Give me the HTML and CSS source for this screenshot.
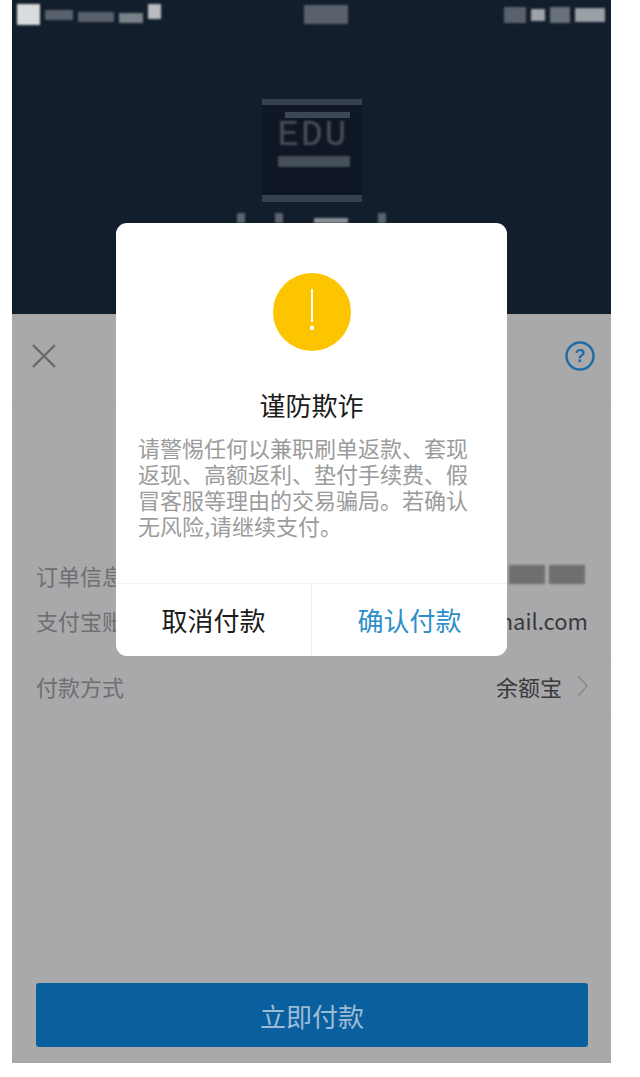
FILE: index.html
```html
<!DOCTYPE html>
<html lang="zh-CN">
<head>
<meta charset="utf-8">
<title>谨防欺诈</title>
<link rel="stylesheet" href="styles.css">
</head>
<body>
<main class="phone">
  <header class="hero">
    <div class="status">
      <div class="status-group">
        <span class="px px-icon"></span>
        <span class="px px-a"></span>
        <span class="px px-b"></span>
        <span class="px px-c"></span>
        <span class="px px-d"></span>
      </div>
      <div class="status-group">
        <span class="px px-time"></span>
      </div>
      <div class="status-group status-right">
        <span class="px px-e"></span>
        <span class="px px-f"></span>
        <span class="px px-g"></span>
        <span class="px px-h"></span>
      </div>
    </div>
    <div class="logo">
      <div class="logo-band"></div>
      <div class="logo-inner">
        <div class="logo-top"></div>
        <div class="logo-word">EDU</div>
        <div class="logo-low"></div>
      </div>
      <div class="logo-band logo-band-low"></div>
    </div>
    <div class="caption">
      <span></span><span></span><span class="caption-wide"></span><span></span>
    </div>
  </header>

  <section class="sheet">
    <nav class="nav">
      <svg class="icon-close" viewBox="0 0 26 26" aria-hidden="true"><path d="M2 2 L24 24 M24 2 L2 24"/></svg>
      <svg class="icon-help" viewBox="0 0 30 30" aria-hidden="true">
        <circle cx="15" cy="15" r="13.5"/>
        <text x="15" y="21" text-anchor="middle">?</text>
      </svg>
    </nav>

    <div class="row row-order">
      <span class="label">订单信息</span>
      <span class="masked"><i></i><i></i></span>
    </div>
    <div class="row row-account">
      <span class="label">支付宝账号</span>
      <span class="value">mail.com</span>
    </div>
    <div class="row row-method">
      <span class="label">付款方式</span>
      <span class="method">
        <span class="value">余额宝</span>
        <svg class="icon-chevron" viewBox="0 0 11 22" aria-hidden="true"><path d="M1 1 L10 11 L1 21"/></svg>
      </span>
    </div>

    <button class="pay" type="button">立即付款</button>
  </section>

  <div class="modal" role="dialog">
    <svg class="warn" viewBox="0 0 78 78" aria-hidden="true">
      <circle class="warn-disc" cx="39" cy="39" r="39"/>
      <rect class="warn-mark" x="38" y="16" width="2" height="33"/>
      <circle class="warn-mark" cx="39" cy="55" r="2.2"/>
    </svg>
    <h1 class="modal-title">谨防欺诈</h1>
    <p class="modal-text">请警惕任何以兼职刷单返款、套现返现、高额返利、垫付手续费、假冒客服等理由的交易骗局。若确认无风险,请继续支付。</p>
    <div class="modal-actions">
      <button class="action action-cancel" type="button">取消付款</button>
      <button class="action action-confirm" type="button">确认付款</button>
    </div>
  </div>
</main>
</body>
</html>
```

FILE: styles.css
```css
* { box-sizing: border-box; }

html, body { margin: 0; background: #fff; }

body {
  font-family: "Noto Sans CJK SC", "Liberation Sans", sans-serif;
  padding-left: 12px;
}

.phone {
  position: relative;
  width: 599px;
  height: 1063px;
  display: flex;
  flex-direction: column;
  overflow: hidden;
}

/* Dark header */
.hero {
  height: 314px;
  flex: none;
  background: #121e2c;
  display: flex;
  flex-direction: column;
  align-items: center;
  overflow: hidden;
}

.status {
  align-self: stretch;
  height: 21px;
  margin-top: 4px;
  padding: 0 6px 0 5px;
  display: flex;
  justify-content: space-between;
  filter: blur(1.2px);
}

.status-group { display: flex; align-items: center; gap: 5px; }
.status-right { gap: 5px; }
.px { display: block; }

.px-icon { width: 23px; height: 21px; background: #d9dbdd; }
.px-a { width: 28px; height: 10px; background: #59626c; }
.px-b { width: 36px; height: 10px; background: #59626c; margin-top: 4px; }
.px-c { width: 24px; height: 10px; background: #7a828a; margin-top: 6px; }
.px-d { width: 13px; height: 15px; background: #b9bdc2; margin-top: -6px; }
.px-time { width: 44px; height: 19px; margin-right: 14px; background: #59626c; }
.px-e { width: 22px; height: 16px; background: #59626c; }
.px-f { width: 14px; height: 12px; background: #9ea3a9; }
.px-g { width: 20px; height: 16px; background: #6a727b; }
.px-h { width: 30px; height: 14px; background: #99a0a6; }

.logo {
  margin-top: 74px;
  width: 100px;
  height: 103px;
  display: flex;
  flex-direction: column;
  background: #0e1723;
}

.logo-band { height: 6px; flex: none; background: #37414d; }
.logo-band-low { height: 7px; margin-top: auto; }

.logo-inner {
  padding: 7px 12px 0 16px;
  display: flex;
  flex-direction: column;
}

.logo-top { height: 6px; margin: 0 0 0 7px; background: #3d4753; filter: blur(0.6px); }

.logo-word {
  margin-top: 2px;
  height: 32px;
  font-family: "Liberation Mono", monospace;
  font-size: 36px;
  line-height: 32px;
  letter-spacing: 2px;
  color: #48525d;
  filter: blur(0.8px);
}

.logo-low { height: 11px; margin-top: 4px; background: #46505b; filter: blur(0.8px); }

.caption {
  width: 150px;
  margin-top: 11px;
  display: flex;
  justify-content: space-between;
  align-items: flex-end;
  filter: blur(0.8px);
}

.caption span { width: 8px; height: 10px; background: #5b646e; }
.caption .caption-wide { width: 34px; height: 5px; background: #8b9198; }

/* Dimmed sheet */
.sheet {
  flex: 1;
  background: #a9a8aa;
  display: flex;
  flex-direction: column;
  padding: 0 23px 16px 24px;
}

.nav {
  height: 90px;
  flex: none;
  margin: 0 -23px 149px -24px;
  padding: 0 16px 6px 19px;
  display: flex;
  justify-content: space-between;
  align-items: center;
  border-bottom: 1px solid #a4a3a5;
}

.icon-close { width: 26px; height: 26px; fill: none; stroke: #6a696c; stroke-width: 2.4; }
.icon-help { width: 30px; height: 30px; }
.icon-help circle { fill: none; stroke: #1f6ca6; stroke-width: 2.4; }
.icon-help text { font-family: "Liberation Sans", sans-serif; font-size: 18px; font-weight: 700; fill: #1f6ca6; }

.row {
  display: flex;
  justify-content: space-between;
  align-items: flex-start;
  font-size: 22px;
  line-height: 30px;
}

.label { color: #6f6e71; white-space: nowrap; }
.value { color: #3a3a3c; }

.row-order { height: 45px; padding-top: 7px; }
.row-account { height: 63px; padding-top: 7px; margin: 0 -23px 0 0; padding-right: 23px; border-bottom: 1px solid #a4a3a5; }
.row-method { height: 56px; padding-top: 10px; margin: 0 -23px 0 0; padding-right: 23px; border-bottom: 1px solid #a4a3a5; }

.masked {
  display: flex;
  gap: 4px;
  height: 19px;
  margin: 5px 3px 0 0;
  filter: blur(1px);
}

.masked i { display: block; width: 36px; background: #6f6e71; }

.method { display: flex; align-items: center; gap: 15px; height: 30px; }
.icon-chevron { width: 11px; height: 22px; fill: none; stroke: #8a898c; stroke-width: 1.6; }

.pay {
  margin-top: auto;
  height: 64px;
  border: 0;
  border-radius: 3px;
  background: #0a609f;
  color: #9dbcd6;
  font: inherit;
  font-size: 26px;
}

/* Dialog */
.modal {
  position: absolute;
  left: 104px;
  top: 223px;
  width: 391px;
  height: 433px;
  padding-top: 50px;
  border-radius: 11px;
  background: #fff;
  display: flex;
  flex-direction: column;
  align-items: center;
}

.warn { width: 78px; height: 78px; flex: none; }
.warn-disc { fill: #fdc500; }
.warn-mark { fill: #fff; }

.modal-title {
  margin: 36px 0 0;
  font-size: 26px;
  line-height: 36px;
  font-weight: 400;
  color: #1c1c1c;
}

.modal-text {
  margin: 11px 0 0;
  padding: 0 22px;
  width: 100%;
  font-size: 22px;
  line-height: 26px;
  color: #9b9b9b;
}

.modal-actions {
  margin-top: auto;
  align-self: stretch;
  height: 73px;
  display: flex;
  border-top: 1px solid #f1f1f1;
}

.action {
  flex: 1;
  border: 0;
  padding: 0 0 2px;
  background: none;
  font: inherit;
  font-size: 26px;
}

.action-cancel { color: #1c1c1c; border-right: 1px solid #f1f1f1; }
.action-confirm { color: #2d8fc9; }
```
